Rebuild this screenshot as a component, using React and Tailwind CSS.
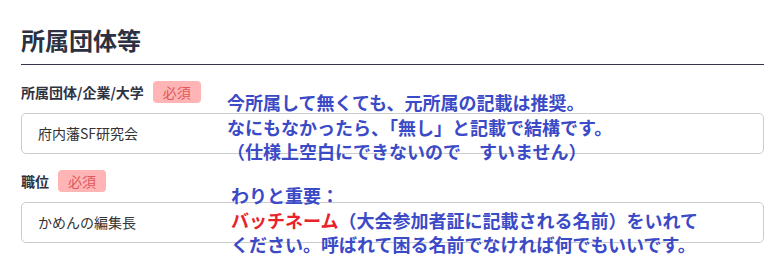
import React from "react";

const jp = { fontFamily: '"Noto Sans CJK JP", "Noto Sans", sans-serif' };

const Badge = () => (
  <span className="flex h-[22px] items-center rounded-[4px] bg-[#ffb5b5] px-[10px] text-[14px] text-[#e2575d]">
    必須
  </span>
);

const Field = ({ label, value }) => (
  <div>
    <div className="mt-[16px] flex items-center gap-[9px]">
      <span className="text-[14px] font-bold leading-[22px] text-[#2f3341]">{label}</span>
      <Badge />
    </div>
    <div className="mt-[10px] flex h-[41px] items-center rounded-[5px] border border-[#cccccc] bg-white px-[16px] text-[14px] text-[#333333]">
      {value}
    </div>
  </div>
);

const App = () => {
  return (
    <div className="relative h-[267px] w-[780px] overflow-hidden bg-white" style={jp}>
      <div className="ml-[21px] mr-[16px] pt-[25px]">
        <h2 className="border-b border-[#33364a] pb-[9px] text-[24px] font-bold leading-[30px] text-[#2c3040]">
          所属団体等
        </h2>
        <Field label="所属団体/企業/大学" value="府内藩SF研究会" />
        <Field label="職位" value="かめんの編集長" />
      </div>

      {/* annotation overlay */}
      <div className="absolute left-[227px] top-[90px] text-[18px] font-semibold leading-[24.5px] text-[#3b4ac6]">
        <div>今所属して無くても、元所属の記載は推奨。</div>
        <div>なにもなかったら、「無し」と記載で結構です。</div>
        <div>（仕様上空白にできないので　すいません）</div>
      </div>
      <div className="absolute left-[231px] top-[183px] text-[18px] font-semibold leading-[24.5px] text-[#3b4ac6]">
        <div>わりと重要：</div>
        <div>
          <span className="text-[#e8232b]">バッチネーム</span>（大会参加者証に記載される名前）をいれて
        </div>
        <div>ください。呼ばれて困る名前でなければ何でもいいです。</div>
      </div>
    </div>
  );
};

export default App;
